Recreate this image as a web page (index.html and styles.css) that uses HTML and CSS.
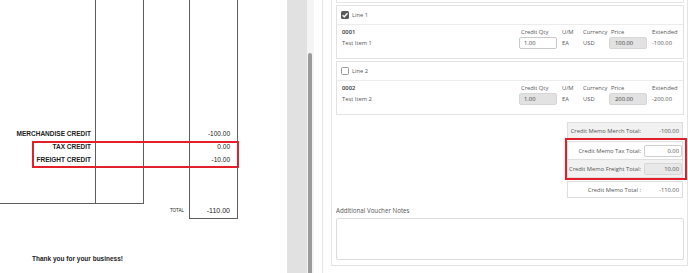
FILE: index.html
```html
<!DOCTYPE html>
<html lang="en">
<head>
    <title>Credit Memo</title>
    <link rel="stylesheet" href="styles.css">
</head>
<body>
    <div class="screen">
        <section class="doc">
            <div class="sheet">
                <div class="cell col-labels underline">
                    <p>MERCHANDISE CREDIT</p>
                    <p>TAX CREDIT</p>
                    <p>FREIGHT CREDIT</p>
                </div>
                <div class="cell underline"></div>
                <div class="cell"></div>
                <div class="cell col-amounts">
                    <p>-100.00</p>
                    <p>0.00</p>
                    <p>-10.00</p>
                </div>
                <div class="total-blank"></div>
                <div class="cell total-label">TOTAL</div>
                <div class="cell total-value">-110.00</div>
            </div>
            <div class="mark doc-mark"></div>
            <p class="thanks">Thank you for your business!</p>
        </section>

        <div class="gutter"></div>
        <div class="scrollbar"><div class="thumb"></div></div>
        <div class="spacer"></div>

        <section class="panel">
            <div class="form">
                <div class="prev-card"></div>

                <div class="line-card">
                    <div class="line-head">
                        <span class="check checked">
                            <svg viewBox="0 0 8 8" width="8" height="8"><path d="M1.6 4.2 L3.3 5.8 L6.5 2.2" fill="none" stroke="#fff" stroke-width="1.3"/></svg>
                        </span>
                        <span>Line 1</span>
                    </div>
                    <div class="line-body">
                        <div class="item">
                            <p class="item-code">0001</p>
                            <p class="item-name">Test Item 1</p>
                        </div>
                        <div class="fields">
                            <div class="field f-qty">
                                <span class="f-label">Credit Qty</span>
                                <span class="input">1.00</span>
                            </div>
                            <div class="field f-um">
                                <span class="f-label">U/M</span>
                                <span class="f-text">EA</span>
                            </div>
                            <div class="field f-cur">
                                <span class="f-label">Currency</span>
                                <span class="f-text">USD</span>
                            </div>
                            <div class="field f-price">
                                <span class="f-label">Price</span>
                                <span class="input readonly">100.00</span>
                            </div>
                            <div class="field f-ext">
                                <span class="f-label">Extended</span>
                                <span class="f-text">-100.00</span>
                            </div>
                        </div>
                    </div>
                </div>

                <div class="line-card">
                    <div class="line-head">
                        <span class="check"></span>
                        <span>Line 2</span>
                    </div>
                    <div class="line-body">
                        <div class="item">
                            <p class="item-code">0002</p>
                            <p class="item-name">Test Item 2</p>
                        </div>
                        <div class="fields">
                            <div class="field f-qty">
                                <span class="f-label">Credit Qty</span>
                                <span class="input readonly">1.00</span>
                            </div>
                            <div class="field f-um">
                                <span class="f-label">U/M</span>
                                <span class="f-text">EA</span>
                            </div>
                            <div class="field f-cur">
                                <span class="f-label">Currency</span>
                                <span class="f-text">USD</span>
                            </div>
                            <div class="field f-price">
                                <span class="f-label">Price</span>
                                <span class="input readonly">200.00</span>
                            </div>
                            <div class="field f-ext">
                                <span class="f-label">Extended</span>
                                <span class="f-text">-200.00</span>
                            </div>
                        </div>
                    </div>
                </div>

                <div class="totals">
                    <div class="t-row shaded merch">
                        <span class="t-label">Credit Memo Merch Total:</span>
                        <span class="t-value">-100.00</span>
                    </div>
                    <div class="t-row tax">
                        <span class="t-label">Credit Memo Tax Total:</span>
                        <span class="t-value t-input">0.00</span>
                    </div>
                    <div class="t-row shaded freight">
                        <span class="t-label">Credit Memo Freight Total:</span>
                        <span class="t-value t-input readonly">10.00</span>
                    </div>
                    <div class="t-row grand">
                        <span class="t-label">Credit Memo Total :</span>
                        <span class="t-value">-110.00</span>
                    </div>
                    <div class="mark totals-mark"></div>
                </div>

                <p class="notes-label">Additional Voucher Notes</p>
                <textarea class="notes"></textarea>
            </div>
        </section>
    </div>
</body>
</html>
```

FILE: styles.css
```css
* {
    box-sizing: border-box;
}

body {
    margin: 0;
    font-family: "Open Sans", sans-serif;
    background: #fff;
}

p {
    margin: 0;
}

.screen {
    display: flex;
    width: 688px;
    height: 273px;
    overflow: hidden;
}

/* left: the printed credit memo */
.doc {
    position: relative;
    width: 287px;
    flex: none;
    background: #fff;
    color: #222;
    font-family: "Liberation Sans", Arial, sans-serif;
}

.sheet {
    display: grid;
    width: 238px;
    grid-template-columns: 96px 48px 46px 48px;
    grid-template-rows: 204px 15px;
}

.cell {
    border-right: 1px solid #5e5e5e;
}

.underline {
    border-bottom: 1px solid #5e5e5e;
}

.col-labels {
    padding: 127px 4px 0 0;
    text-align: right;
    font-size: 6.5px;
    font-weight: bold;
}

.col-labels p,
.col-amounts p {
    height: 13px;
    line-height: 13px;
}

.col-amounts {
    padding: 127px 7px 0 0;
    text-align: right;
    font-size: 6.5px;
}

.total-blank {
    grid-column: 1 / 3;
}

.total-label {
    padding-right: 5px;
    text-align: right;
    font-size: 4.5px;
    line-height: 14px;
}

.total-value {
    padding-right: 7px;
    border-bottom: 1px solid #5e5e5e;
    text-align: right;
    font-size: 7px;
    line-height: 14px;
}

.thanks {
    margin: 35px 0 0 32px;
    font-size: 6.5px;
    font-weight: bold;
    line-height: 10px;
}

.mark {
    position: absolute;
    border: 2px solid #e3202a;
}

.doc-mark {
    left: 32px;
    top: 141px;
    width: 207px;
    height: 27px;
}

/* viewer chrome between the two panes */
.gutter {
    width: 20px;
    flex: none;
    background: #e1e1e1;
}

.scrollbar {
    width: 7px;
    flex: none;
    padding: 53px 0 0 1px;
    background: #f4f4f4;
}

.thumb {
    width: 4px;
    height: 100%;
    background: #9b9b9b;
    border-radius: 2px 2px 0 0;
}

.spacer {
    width: 8px;
    flex: none;
}

/* right: the entry form */
.panel {
    flex: 1;
    padding-left: 8px;
    border-left: 1px solid #e6e6e6;
    color: #555;
    font-size: 5.8px;
}

.form {
    width: 357px;
    height: 266px;
    padding: 0 3px 0 4px;
    border: 1px solid #e4e4e4;
    border-top: none;
}

.prev-card {
    height: 3px;
    border: 1px solid #e6e6e6;
    border-top: none;
}

.line-card {
    height: 54px;
    margin-top: 2px;
    border: 1px solid #e2e2e2;
    background: #fff;
}

.line-head {
    display: flex;
    align-items: center;
    gap: 3px;
    height: 19px;
    padding-left: 4px;
    border-bottom: 1px solid #ececec;
}

.check {
    display: flex;
    width: 8px;
    height: 8px;
    border: 1px solid #999;
    border-radius: 1.5px;
    background: #fff;
}

.check.checked {
    border: none;
    background: #5b5b5b;
}

.line-body {
    display: flex;
    justify-content: space-between;
    padding: 3px 5px 0 5px;
}

.item-code {
    color: #333;
    font-weight: 600;
    line-height: 9px;
}

.item-name {
    margin-top: 2px;
    line-height: 9px;
}

.fields {
    display: flex;
}

.field {
    display: flex;
    flex-direction: column;
}

.f-label {
    padding-left: 2px;
    line-height: 9px;
    white-space: nowrap;
}

.f-text {
    line-height: 12px;
}

.f-um .f-label,
.f-cur .f-label,
.f-ext .f-label {
    padding-left: 0;
}

.f-qty {
    width: 38px;
}

.f-um {
    width: 16px;
    margin-left: 5px;
}

.f-cur {
    width: 24px;
    margin-left: 5px;
}

.f-price {
    width: 38px;
    margin-left: 2px;
}

.f-ext {
    width: 26px;
    margin-left: 5px;
}

.input {
    height: 12px;
    padding-left: 4px;
    border: 1px solid #c9c9c9;
    border-radius: 2px;
    background: #fff;
    color: #444;
    line-height: 10px;
}

.input.readonly {
    border-color: #d6d6d6;
    background: #e2e2e2;
}

.f-price .input {
    padding-left: 5px;
}

.totals {
    position: relative;
    width: 116px;
    margin: 7px 1px 0 auto;
}

.t-row {
    display: flex;
    align-items: center;
    border: 1px solid #dedede;
    background: #fff;
    white-space: nowrap;
}

.t-row.shaded {
    background: #f1f1f1;
}

.merch {
    height: 17px;
}

.tax {
    height: 19px;
    margin-top: 2px;
}

.freight {
    height: 18px;
    border-top: none;
}

.grand {
    height: 17px;
    margin-top: 3px;
}

.t-label {
    width: 73px;
    text-align: right;
}

.t-value {
    width: 38px;
    margin-left: 3px;
    padding-right: 3px;
    text-align: right;
}

.t-input {
    height: 12px;
    padding-right: 2px;
    border: 1px solid #cfcfcf;
    border-radius: 2px;
    background: #fff;
    line-height: 10px;
}

.t-input.readonly {
    border-color: #d8d8d8;
    background: #e8e8e8;
}

.totals-mark {
    left: -2px;
    top: 16px;
    width: 122px;
    height: 42px;
}

.notes-label {
    margin-top: 8px;
    font-size: 6.2px;
    line-height: 9px;
}

.notes {
    display: block;
    width: 100%;
    height: 42px;
    margin-top: 3px;
    border: 1px solid #dcdcdc;
    border-radius: 2px;
    resize: none;
}
```
